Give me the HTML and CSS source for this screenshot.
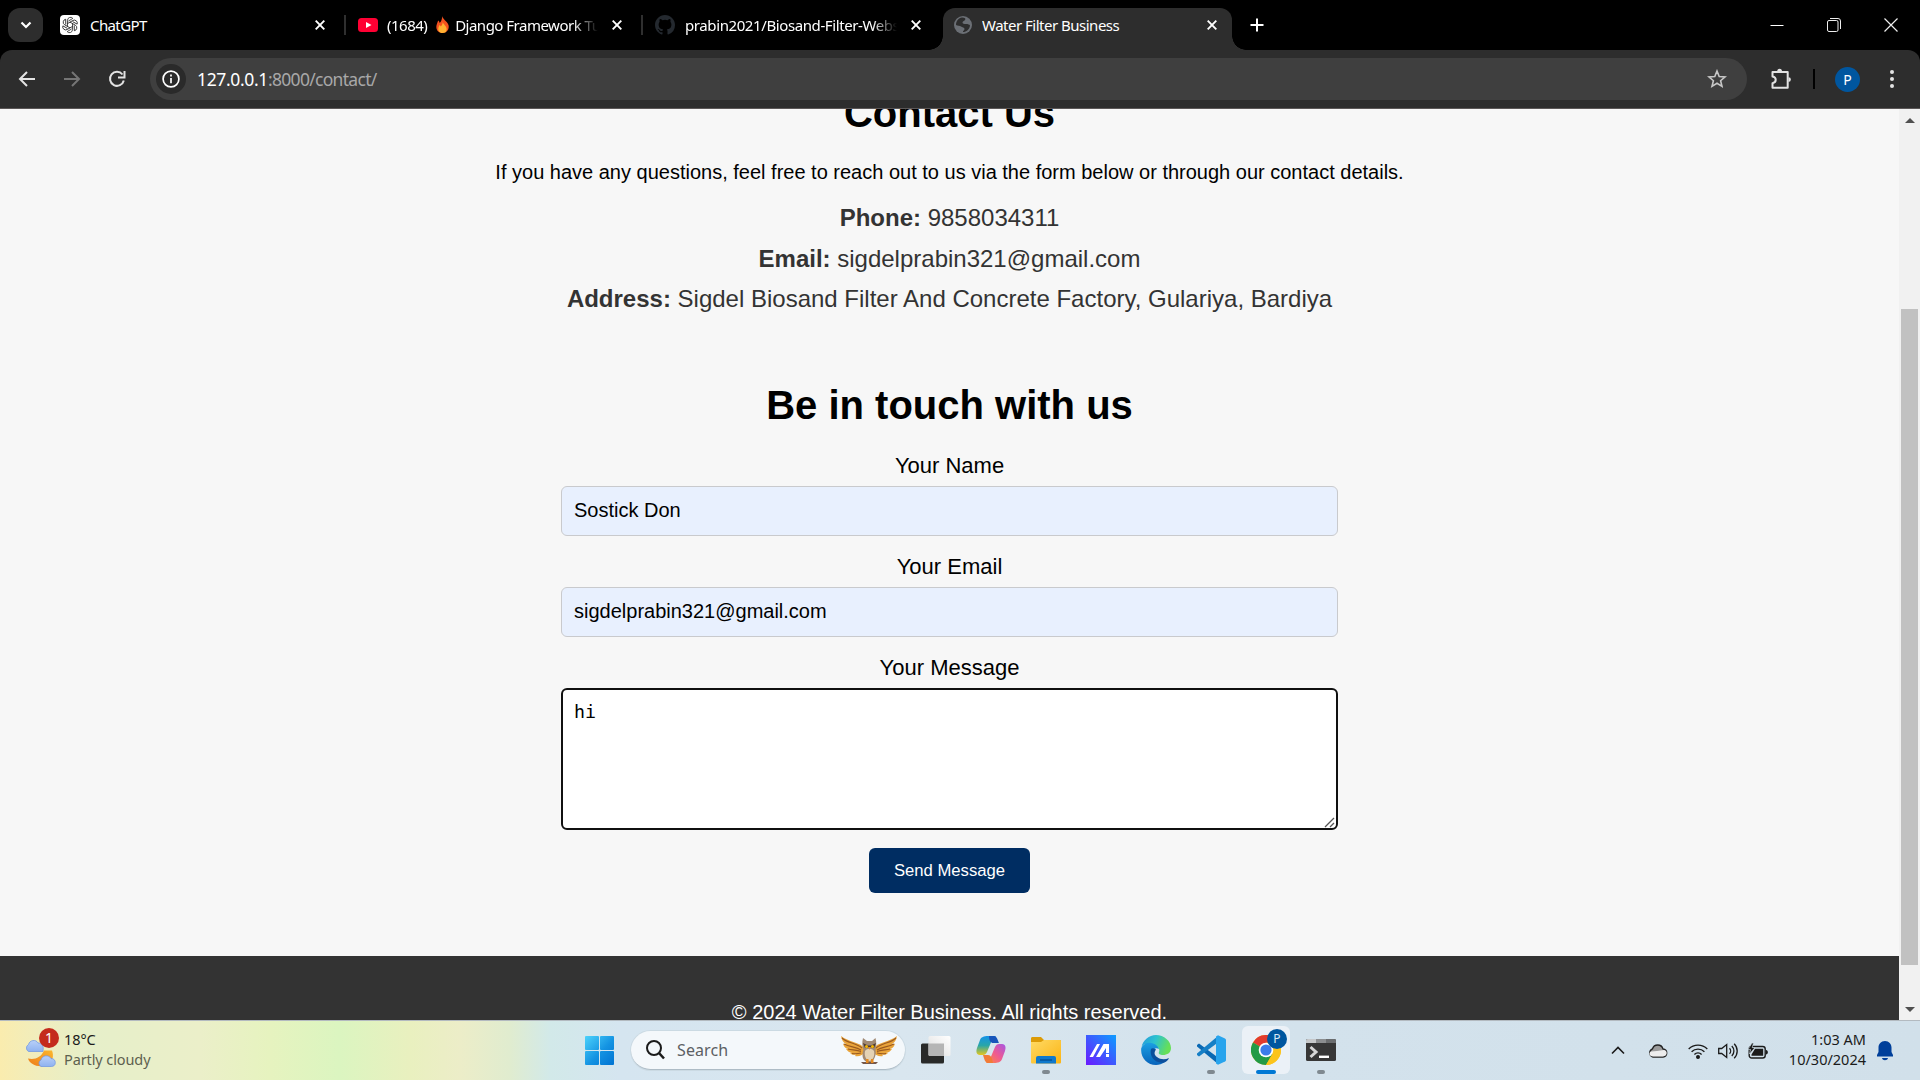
FILE: index.html
```html
<!DOCTYPE html>
<html lang="en">
<head>
<meta charset="utf-8">
<title>Water Filter Business</title>
<link rel="stylesheet" href="styles.css">
</head>
<body>
<div class="screen">
<header class="tabstrip">
  <div class="tab-menu"><svg width="12" height="8" viewBox="0 0 12 8"><path d="M1.5 1.5 6 6l4.500-4.500" fill="none" stroke="#fff" stroke-width="2.200"/></svg></div>
  <div class="tab tab-first">
    <svg class="fav" width="20" height="20" viewBox="0 0 20 20"><rect width="20" height="20" rx="4" fill="#fff"/><g fill="none" stroke="#222" stroke-width=".8"><path id="k" d="M7.500 11.500V5.300a3 3 0 0 1 5.300-1.900L8.300 6.100"/><use href="#k" transform="rotate(60 10 10)"/><use href="#k" transform="rotate(120 10 10)"/><use href="#k" transform="rotate(180 10 10)"/><use href="#k" transform="rotate(240 10 10)"/><use href="#k" transform="rotate(300 10 10)"/></g></svg>
    <span class="tab-title t1">ChatGPT</span>
    <svg class="close" viewBox="0 0 10 10"><path d="M.7.7l8.600 8.600M9.300.7L.7 9.300"/></svg>
  </div>
  <i class="sep"></i>
  <div class="tab tab-mid yt">
    <svg class="fav" width="20" height="20" viewBox="0 0 20 20"><rect y="3" width="20" height="14" rx="3.500" fill="#ff0033"/><path d="M8 7v6l5.500-3z" fill="#fff"/></svg>
    <span class="tab-title t2 fade">(1684) <svg class="flame" width="13" height="17" viewBox="0 0 13 17"><path d="M6 0c.5 3 5 5 6.500 9 1 4-1.500 8-6 8S-.5 13 .6 9c.5-2 1.200-3 1.500-4.500C3 5 3.500 6 3.700 7 5.500 5 6.200 3 6 0z" fill="#f4511e"/><path d="M6.700 6c.3 2 4 4 4 7s-2 4-4.200 4-4.500-1.500-4.200-4.500c.2-1.500.8-2 1-3.500 1 .5 1.300 1 1.600 1.600C6 9 6.800 8 6.700 6z" fill="#ffb031"/></svg> Django Framework Tu</span>
    <svg class="close" viewBox="0 0 10 10"><path d="M.7.7l8.600 8.600M9.300.7L.7 9.300"/></svg>
  </div>
  <i class="sep"></i>
  <div class="tab tab-mid gh">
    <svg class="fav" width="20" height="20" viewBox="0 0 16 16"><path fill="#24292f" d="M8 0C3.580 0 0 3.580 0 8c0 3.540 2.290 6.530 5.470 7.590.4.070.55-.17.55-.38 0-.19-.01-.82-.01-1.490-2.010.37-2.530-.49-2.690-.94-.09-.23-.48-.94-.82-1.130-.28-.15-.68-.52-.01-.53.63-.01 1.080.58 1.230.82.72 1.210 1.870.87 2.330.66.070-.52.280-.87.510-1.070-1.780-.2-3.640-.89-3.640-3.950 0-.87.310-1.590.82-2.150-.08-.2-.36-1.020.080-2.120 0 0 .67-.21 2.200.82a7.600 7.600 0 0 1 4 0c1.530-1.040 2.200-.82 2.200-.82.440 1.100.160 1.920.080 2.120.510.560.820 1.270.820 2.150 0 3.070-1.870 3.750-3.650 3.950.290.250.540.730.540 1.480 0 1.070-.01 1.930-.01 2.200 0 .210.150.460.550.380A8 8 0 0 0 16 8c0-4.420-3.580-8-8-8z"/></svg>
    <span class="tab-title t3 fade">prabin2021/Biosand-Filter-Webs</span>
    <svg class="close" viewBox="0 0 10 10"><path d="M.7.7l8.600 8.600M9.300.7L.7 9.300"/></svg>
  </div>
  <div class="tab tab-active">
    <svg class="fav" width="18" height="18" viewBox="0 0 18 18"><circle cx="9" cy="9" r="9" fill="#6b6f75"/><path d="M8 1.500c3 0 4 1 3 2.500S8.500 5 8.500 6.500 10 8 12 8s3.500.5 4 1.500c-.5 4-3.500 6.500-7 6.500-.5-1 1.500-1.500 1.500-3S8 11.500 7 10.500 3.500 10 2 9C2 5 4.500 2 8 1.500z" fill="#2d2d2d"/></svg>
    <span class="tab-title t4">Water Filter Business</span>
    <svg class="close" viewBox="0 0 10 10"><path d="M.7.7l8.600 8.600M9.300.7L.7 9.300"/></svg>
  </div>
  <svg class="plus" width="14" height="14" viewBox="0 0 14 14"><path d="M7 .5v13M.5 7h13" stroke="#fff" stroke-width="2"/></svg>
  <div class="winctl">
    <svg width="14" height="14" viewBox="0 0 14 14"><path d="M.5 7.500h13" stroke="#fff"/></svg>
    <svg width="14" height="14" viewBox="0 0 14 14" fill="none" stroke="#eee"><rect x=".5" y="2.500" width="10.500" height="11" rx="1.500"/><path d="M3 .5h8a2.500 2.500 0 0 1 2.500 2.500v8"/></svg>
    <svg width="14" height="14" viewBox="0 0 14 14"><path d="M.5.5l13 13M13.500.5l-13 13" stroke="#eee" stroke-width="1.200"/></svg>
  </div>
</header>
<nav class="toolbar">
  <svg class="nav-ic" width="18" height="18" viewBox="0 0 18 18"><path d="M17 9H2.500M9 2L2 9l7 7" fill="none" stroke="#e3e3e3" stroke-width="2"/></svg>
  <svg class="nav-ic" width="18" height="18" viewBox="0 0 18 18"><path d="M1 9h14.500M9 2l7 7-7 7" fill="none" stroke="#757575" stroke-width="2"/></svg>
  <svg class="nav-ic" width="18" height="18" viewBox="0 0 18 18"><path d="M15.800 10.500A7 7 0 1 1 14.500 4.500" fill="none" stroke="#e3e3e3" stroke-width="2"/><path d="M16.500 1v6.500H10" fill="none" stroke="#e3e3e3" stroke-width="2"/></svg>
  <div class="urlbar">
    <span class="site-info"><svg width="18" height="18" viewBox="0 0 18 18"><circle cx="9" cy="9" r="7.900" fill="none" stroke="#fff" stroke-width="1.700"/><path d="M9 8v5.300M9 4.600v1.900" stroke="#fff" stroke-width="1.700"/></svg></span>
    <span class="url">127.0.0.1<span>:8000/contact/</span></span>
    <svg class="star" width="20" height="20" viewBox="0 0 20 20"><path d="M10 2l2.200 5.500 5.900.4-4.500 3.800 1.400 5.700L10 14.300l-5 3.100 1.400-5.700L1.900 7.900l5.900-.4z" fill="none" stroke="#c7c7c7" stroke-width="1.600"/></svg>
  </div>
  <svg class="puzzle" width="22" height="22" viewBox="0 0 22 22"><path d="M2.500 4h15.200v15.700H2.500v-4.500c4.300-.8 4.300-6 0-6.800z" fill="none" stroke="#e3e3e3" stroke-width="2" stroke-linejoin="round"/><path d="M7.200 3.500a2.400 2.700 0 0 1 4.800 0zM18.500 9.200a2.400 2.400 0 0 1 0 4.800z" fill="#e3e3e3"/></svg>
  <i class="bar"></i>
  <span class="avatar">P</span>
  <svg class="kebab" width="4" height="18" viewBox="0 0 4 18" fill="#e3e3e3"><circle cx="2" cy="2" r="2"/><circle cx="2" cy="9" r="2"/><circle cx="2" cy="16" r="2"/></svg>
</nav>
<div class="viewport">
  <main class="page">
    <section class="contact">
      <h2>Contact Us</h2>
      <p class="intro">If you have any questions, feel free to reach out to us via the form below or through our contact details.</p>
      <p class="detail"><b>Phone:</b> 9858034311</p>
      <p class="detail"><b>Email:</b> sigdelprabin321@gmail.com</p>
      <p class="detail"><b>Address:</b> Sigdel Biosand Filter And Concrete Factory, Gulariya, Bardiya</p>
    </section>
    <form class="form">
      <h2>Be in touch with us</h2>
      <label>Your Name</label>
      <input type="text" value="Sostick Don">
      <label>Your Email</label>
      <input type="text" value="sigdelprabin321@gmail.com">
      <label>Your Message</label>
      <div class="message">hi<svg class="grip" width="12" height="12" viewBox="0 0 12 12"><path d="M1 11L10 2M6 11l4-4" stroke="#555" stroke-width="1.300"/></svg></div>
      <button type="button">Send Message</button>
    </form>
    <footer class="footer">© 2024 Water Filter Business. All rights reserved.</footer>
  </main>
  <aside class="scroll">
    <i class="arrow up"></i><i class="thumb"></i><i class="arrow down"></i>
  </aside>
</div>
<div class="taskbar">
  <div class="weather">
    <svg width="36" height="44" viewBox="0 0 36 44"><defs><linearGradient id="cl" x1="0" y1="0" x2="0" y2="1"><stop offset="0" stop-color="#b9d0f8"/><stop offset="1" stop-color="#8fb2f0"/></linearGradient><linearGradient id="mo" x1="1" y1="0" x2="0" y2="1"><stop offset="0" stop-color="#fbb52c"/><stop offset="1" stop-color="#ee7d1a"/></linearGradient></defs>
      <path d="M4 29.500c7 1.500 13-1 16-8h8c2 5 1 12-5 14.500-8 3-17 0-19-6.500z" fill="url(#mo)"/>
      <path d="M4.500 22.500a4 4 0 0 1 0-7C5.500 11 12 10 14 14c4 0 6 2 5 8.500z" fill="url(#cl)" stroke="#6b94e2" stroke-width=".7"/>
      <path d="M17 37.500a3.600 3.600 0 0 1 0-6.500c1-5 8-5.500 10-1.500 3 0 4.300 2 4.300 4.200 0 2.600-1.800 3.800-4 3.800z" fill="url(#cl)" stroke="#6b94e2" stroke-width=".7"/></svg>
    <span class="badge">1</span>
    <div class="weather-text"><span>18°C</span><span class="dim">Partly cloudy</span></div>
  </div>
  <div class="apps">
    <div class="app"><svg width="29" height="29" viewBox="0 0 29 29"><defs><linearGradient id="w" x1="0" y1="0" x2="29" y2="29" gradientUnits="userSpaceOnUse"><stop offset="0" stop-color="#4cd2fb"/><stop offset=".55" stop-color="#1493e2"/><stop offset="1" stop-color="#0073d2"/></linearGradient></defs><g fill="url(#w)"><rect width="14" height="14" rx="1"/><rect x="15" width="14" height="14" rx="1"/><rect y="15" width="14" height="14" rx="1"/><rect x="15" y="15" width="14" height="14" rx="1"/></g></svg></div>
    <div class="search"><svg width="19" height="20" viewBox="0 0 19 20"><circle cx="8" cy="8" r="7" fill="none" stroke="#1b1b1b" stroke-width="2"/><path d="M13 13l5 5.500" stroke="#1b1b1b" stroke-width="2.600"/></svg><span>Search</span>
      <svg class="owl" width="56" height="30" viewBox="0 0 56 30"><g id="wing"><path d="M24 14C20 7 7 7 0 1c1 5 3 7 5 8-2 0-2 0-3-.5 1 4 3 5 5 5.500H5c2 3 4 3.500 6 3.500l-2 .5c2 2 4 2 6 1.500l-1 1.500c4 1 8-1 10-4z" fill="#e9a43a"/><path d="M1 3c5 5 14 5 20 10M3 9c6 3 12 3 17 6M7 14c4 1 9 1 13 2.500M11 18.500c3 .5 6 .3 9-.5" fill="none" stroke="#9a5a20" stroke-width="1.100"/></g><use href="#wing" transform="matrix(-1 0 0 1 56 0)"/><path d="M22 3l4 3h5l3.500-3c1 4 1 8 0 12 1 5-1 10-5 12h-4c-4-2-5-7-3-12-1.500-4-1.500-8-.5-12z" fill="#a18a74"/><path d="M24 16c2-3 7-3 9 0 1 5-1 9-4.500 10C25 25 23 21 24 16z" fill="#e4d2b4"/><path d="M22 8l5 2.500h3L35 8l-2 5-4.500-1-4.500 1z" fill="#4c3a32"/><circle cx="25.500" cy="11.500" r="1.500" fill="#f5b800"/><circle cx="31.500" cy="11.500" r="1.500" fill="#f5b800"/><path d="M27.300 12h2.400l-1.200 3z" fill="#ea8b18"/><path d="M20 27h17l-2 2H22z" fill="#75584b"/><path d="M25 24h2.500v4H25zM30 24h2.500v4H30z" fill="#e58a20"/></svg></div>
    <div class="app"><svg width="30" height="30" viewBox="0 0 30 30"><defs><linearGradient id="tv" x1="1" y1="0" x2="0" y2="1"><stop offset="0" stop-color="#fff"/><stop offset="1" stop-color="#dedede"/></linearGradient></defs><rect y="8.500" width="23" height="20" rx="1.500" fill="#292a29"/><rect x="7.500" y="1" width="22" height="20" rx="1.500" fill="url(#tv)"/><path d="M7.500 8.500H23V21H9a1.500 1.500 0 0 1-1.500-1.500z" fill="#b5b5b5"/></svg></div>
    <div class="app"><svg width="30" height="30" viewBox="0 0 30 30"><defs><linearGradient id="c1" x1="0" y1="0" x2="0" y2="1"><stop offset="0" stop-color="#1492e8"/><stop offset=".5" stop-color="#29a6a8"/><stop offset="1" stop-color="#e6c71c"/></linearGradient><linearGradient id="c2" x1="0" y1="1" x2="1" y2="0"><stop offset="0" stop-color="#ff8b3a"/><stop offset=".5" stop-color="#ef5b91"/><stop offset="1" stop-color="#a656e4"/></linearGradient></defs><path d="M12 1h8l-4 4-5 12c-1 2-2 3-4 3H4c-4 0-4-4-3-7L4 5c1-3 4-4 8-4z" fill="url(#c1)"/><path d="M13 1h5c3 0 4 5 5 7h-6c-2 0-4-2-4-7z" fill="#1755ba"/><path d="M18 28h-8l4-4 5-12c1-2 2-3 4-3h3c4 0 4 4 3 7l-3 8c-1 3-4 4-8 4z" fill="url(#c2)"/><path d="M17 28h-5c-3 0-4-5-5-8h5c3 0 4 3 5 8z" fill="#f17b37"/></svg></div>
    <div class="app run"><svg width="30" height="28" viewBox="0 0 30 28"><defs><linearGradient id="fo" x1="0" y1="0" x2="1" y2="1"><stop offset="0" stop-color="#ffda64"/><stop offset="1" stop-color="#fbb414"/></linearGradient></defs><path d="M0 2.500C0 1.500.7 1 1.500 1H10l3 3h15.500c1 0 1.500.5 1.500 1.500V12H0z" fill="#dc9b07"/><path d="M0 6h10l3-2h15.500c1 0 1.500.5 1.500 1.500V26c0 1-.5 1.500-1.500 1.500h-27C.5 27.500 0 27 0 26z" fill="url(#fo)"/><path d="M5 27.500V22a2 2 0 0 1 2-2h16a2 2 0 0 1 2 2v5.500z" fill="#1079cc"/><path d="M9 24h12" stroke="#064d91" stroke-width="1.300"/></svg></div>
    <div class="app"><svg width="30" height="30" viewBox="0 0 30 30"><defs><linearGradient id="ma" x1="0" y1="1" x2="1" y2="0"><stop offset="0" stop-color="#6c18ff"/><stop offset="1" stop-color="#0d9dff"/></linearGradient></defs><rect width="30" height="30" fill="url(#ma)"/><path d="M3.500 22L11 9h3L7 22zM10 22l7.500-13H23v9h-3v-5L14 22z" fill="#fff"/><rect x="20" y="19" width="3" height="3" fill="#fff"/></svg></div>
    <div class="app"><svg width="30" height="30" viewBox="0 0 30 30"><defs><linearGradient id="e1" x1="0" y1="0" x2="1" y2=".3"><stop offset="0" stop-color="#2496dd"/><stop offset=".5" stop-color="#2dc3cf"/><stop offset="1" stop-color="#66df58"/></linearGradient><linearGradient id="e2" x1="0" y1="0" x2="0" y2="1"><stop offset="0" stop-color="#1b9fe2"/><stop offset="1" stop-color="#0763bb"/></linearGradient></defs><path d="M.5 12C2 5 8 0 15 0c8 0 15 6 15 13 0 5-4 7-8 7-3 0-5-1-4-3s0-5-4-6C9 8 3 8 .5 12z" fill="url(#e1)"/><path d="M.3 13C2 9 6 7 10 8c4 .5 7 3 8 6-4-2-7 1-6 5 1 5 6 8 12 8-3 2-6 3-9 3C6 30-1 22 .3 13z" fill="url(#e2)"/><path d="M10 14c-2 7 4 15 13 13.500 2-.5 4-2 5-4.500-4 2-9 1.500-12-1-3-2-3-5-1-7.500-2-1.500-4-1.500-5-.5z" fill="#0c4f9c"/></svg></div>
    <div class="app run"><svg width="30" height="30" viewBox="0 0 30 30"><path d="M1 10l2-1.500 19 14V29L1 11.500z" fill="#0a69b4"/><path d="M1 20l2 1.500 19-14V1L1 18.500z" fill="#167fc6"/><path d="M22 .2l7 3.300c.7.4 1 .9 1 1.600v19.800c0 .7-.3 1.200-1 1.600l-7 3.300-2-1.300V1.500z" fill="#28a4ed"/></svg></div>
    <div class="app on"><svg width="30" height="30" viewBox="0 0 30 30"><circle cx="15" cy="15" r="15" fill="#fcc41c"/><path d="M15 15L2 7.500A15 15 0 0 1 28 7.500z" fill="#e23b2e"/><path d="M15 15L2 7.500a15 15 0 0 0 13 22.500l6.500-11.250z" fill="#229a46"/><path d="M15 7.500h13a15 15 0 0 1-13 22.500l6.500-11z" fill="#fcc41c"/><circle cx="15" cy="15" r="7.300" fill="#fff"/><circle cx="15" cy="15" r="5.600" fill="#3b7cea"/></svg><span class="mini">P</span></div>
    <div class="app run"><svg width="30" height="22" viewBox="0 0 30 22"><rect width="30" height="22" rx="1.500" fill="#373737"/><path d="M1.500 0H10v4H0V1.500A1.500 1.500 0 0 1 1.500 0z" fill="#c6c8ca"/><path d="M10 0h10v4H10z" fill="#8c8e90"/><path d="M20 0h8.500A1.500 1.500 0 0 1 30 1.500V4H20z" fill="#6b6d6f"/><path d="M4.500 8l5.500 5-5.500 5" fill="none" stroke="#d6d6d6" stroke-width="3"/><path d="M13 17.800h10" stroke="#fff" stroke-width="2.400"/></svg></div>
  </div>
  <div class="tray">
    <svg class="i1" width="14" height="9" viewBox="0 0 14 9"><path d="M1 7.500l6-6 6 6" fill="none" stroke="#1b1b1b" stroke-width="1.600"/></svg>
    <svg class="i2" width="20" height="14" viewBox="0 0 20 14"><path d="M5 13a4.300 4.300 0 0 1-.5-8.200C6-.2 13.500-.4 15 5c5 .5 5 7.500 0 8z" fill="#9b9b9b" stroke="#222" stroke-width="1.300"/><path d="M5 12.500c-4 0-4.500-4-2-5L9 7l7-1c4 1 3.500 6-1 6.500z" fill="#ededed"/></svg>
    <svg class="i3" width="20" height="16" viewBox="0 0 20 16" fill="none" stroke="#1b1b1b" stroke-width="1.400"><path d="M.7 6a13.200 13.200 0 0 1 18.600 0M3.600 8.800a9 9 0 0 1 12.800 0M6.400 11.500a5.200 5.200 0 0 1 7.200 0"/><circle cx="10" cy="14" r="1.300" fill="#1b1b1b"/></svg>
    <svg class="i4" width="20" height="18" viewBox="0 0 20 18" fill="none" stroke="#1b1b1b" stroke-width="1.300"><path d="M.7 6.500v5h3l5 4V2.500l-5 4z"/><path d="M11.500 6.200a4 4 0 0 1 0 5.600M13.800 4a7 7 0 0 1 0 10M16.200 1.700a10.400 10.400 0 0 1 0 14.600"/></svg>
    <svg class="i5" width="20" height="16" viewBox="0 0 20 16"><rect x="1.200" y="3.500" width="16" height="11.500" rx="2.500" fill="none" stroke="#1b1b1b" stroke-width="1.400"/><path d="M18 7c2.500 0 2.500 4.500 0 4.500zM3.500 11.500L7 5.800h8.200v7H3.500z" fill="#1b1b1b"/><path d="M4 0L0 6.500h2.500L1.500 11 7 4.500H4.200L5.500 0z" fill="#1b1b1b" stroke="#d1e0ea" stroke-width=".6"/></svg>
    <div class="clock"><span>1:03 AM</span><span>10/30/2024</span></div>
    <svg class="i6" width="16" height="20" viewBox="0 0 16 20"><path d="M8 0c4 0 6.500 3 6.500 6.500V11l1.500 3v1.500H0V14l1.500-3V6.500C1.500 3 4 0 8 0zM5 17h6c-.5 3-5.500 3-6 0z" fill="#003f9a"/></svg>
  </div>
</div>
</div>
</body>
</html>
```
FILE: styles.css
```css
* { box-sizing: border-box; }
body { margin: 0; overflow: hidden; font-family: "Liberation Sans", Arial, sans-serif; }
svg { display: block; flex: none; }
.screen { width: 1920px; height: 1080px; display: flex; flex-direction: column; background: #000; }

.tabstrip { height: 50px; flex: none; display: flex; align-items: center; padding-left: 8px; background: #000; color: #fff; }
.tab-menu { width: 35px; height: 34px; border-radius: 12px; background: #2d2d2d; display: flex; align-items: center; justify-content: center; }
.tab { display: flex; align-items: center; height: 42px; }
.tab-first { width: 301px; padding: 0 19px 0 17px; }
.tab-mid { width: 295px; padding: 0 19px 0 12px; }
.tab-mid.gh { padding-right: 17px; }
.sep { width: 2px; height: 20px; background: #2f2f2f; }
.tab-title { flex: 1; min-width: 0; margin-left: 9px; margin-right: 14px; overflow: hidden; white-space: nowrap; font: 15px/20px "Noto Sans", sans-serif; display: flex; }
.t2, .t3 { white-space: pre; }
.tab-title.fade { -webkit-mask-image: linear-gradient(to right, #000 88%, transparent 100%); mask-image: linear-gradient(to right, #000 88%, transparent 100%); }
.t1 { letter-spacing: -.6px; margin-left: 10px; }
.t2 { letter-spacing: -.5px; }
.t3 { letter-spacing: -.4px; margin-left: 10px; }
.t4 { letter-spacing: -.5px; margin-left: 10px; }
.flame { margin: 1px 3px 0 5px; }
.close { width: 10px; height: 10px; stroke: #fff; stroke-width: 1.900; }
.tab-active { position: relative; width: 289px; height: 42px; margin-left: 5px; padding: 0 15px 8px 11px; background: #2d2d2d; border-radius: 12px 12px 0 0; align-self: flex-end; }
.tab-active::before, .tab-active::after { content: ""; position: absolute; bottom: 0; width: 14px; height: 14px; }
.tab-active::before { left: -14px; background: radial-gradient(circle at 0 0, transparent 13.500px, #2d2d2d 14px); }
.tab-active::after { right: -14px; background: radial-gradient(circle at 100% 0, transparent 13.500px, #2d2d2d 14px); }
.plus { margin-left: 18px; }
.winctl { margin-left: auto; display: flex; gap: 43px; padding-right: 22px; }

.toolbar { height: 59px; flex: none; display: flex; align-items: center; padding-left: 18px; background: #2d2d2d; border-bottom: 1px solid #5b5757; border-radius: 12px 12px 0 0; }
.nav-ic { margin-right: 27px; }
.urlbar { width: 1597px; height: 42px; margin-left: -3px; border-radius: 21px; background: #3f3f3f; display: flex; align-items: center; padding: 0 20px 0 6px; }
.site-info { width: 30px; height: 30px; border-radius: 50%; background: #2a2a2a; display: flex; align-items: center; justify-content: center; }
.url { margin-left: 11px; font: 17.500px/24px "Noto Sans", sans-serif; letter-spacing: -.35px; color: #fff; }
.url span { color: #a8a8a8; letter-spacing: -.7px; }
.star { margin-left: auto; }
.puzzle { margin-left: 23px; }
.bar { width: 2px; height: 20px; margin-left: 21px; background: #000; }
.avatar { width: 25px; height: 25px; margin-left: 20px; border-radius: 50%; background: #00569f; color: #fff; font: 14px/25px "Noto Sans", sans-serif; text-align: center; }
.kebab { margin-left: 30px; }

.viewport { height: 911px; flex: none; display: flex; overflow: hidden; }
.page { width: 1899px; background: #f7f7f7; overflow: hidden; text-align: center; color: #000; }
h2 { margin: 0; font-size: 40px; line-height: 46px; font-weight: bold; }
.contact { margin-top: -19px; }
.intro { margin: 13px 0 0; font-size: 20px; line-height: 46px; }
.detail { margin: 0; font-size: 24px; line-height: 40.700px; color: #333; }
.intro + .detail { margin-top: 3px; }
.form { width: 777px; margin: 62px auto 0; display: flex; flex-direction: column; align-items: center; }
.form label { font-size: 22px; line-height: 26px; margin-bottom: 7px; }
.form h2 + label { margin-top: 25px; }
.form input { width: 777px; height: 50px; border: 1px solid #c9cacd; border-radius: 6px; background: #e8f0fe; padding: 0 12px 2px; font: 20px "Liberation Sans", Arial, sans-serif; margin-bottom: 18px; outline: 0; color: #000; }
.message { position: relative; width: 777px; height: 142px; border: 2px solid #101010; border-radius: 6px; background: #fff; padding: 10px 11px; text-align: left; font: 18.300px/24px "DejaVu Sans Mono", monospace; }
.grip { position: absolute; right: 0; bottom: 0; }
.form button { width: 161px; height: 45px; margin-top: 18px; border: 0; border-radius: 6px; background: #002d62; color: #fff; font: 16.670px "Liberation Sans", Arial, sans-serif; padding: 0; }
.footer { margin-top: 63px; height: 120px; background: #333; color: #fff; font-size: 20px; line-height: 24px; padding-top: 44px; }
.scroll { width: 21px; background: #f1f1f1; display: flex; flex-direction: column; align-items: center; }
.arrow { border: 5px solid transparent; width: 0; height: 0; }
.up { border-top: 0; border-bottom-color: #505050; margin-top: 9px; }
.thumb { width: 17px; height: 656px; margin-top: 186px; background: #c1c1c1; }
.down { border-bottom: 0; border-top-color: #505050; margin-top: 42px; }

.taskbar { height: 60px; flex: none; border-top: 1px solid #b3bac0; display: flex; align-items: center; font-family: "Noto Sans", sans-serif; color: #1b1b1b; background: linear-gradient(to right, #faecae 0, #f0edbd 40px, #e6efc9 90px, #ebefc9 200px, #e6f3bf 270px, #dbf5c0 340px, #e9f0bf 410px, #ecedc8 460px, #e0eccf 510px, #d2e9e9 550px, #d5e5f0 620px, #d9e6ef 900px, #d3e2ec 1300px, #d1e0ea 1920px); }
.weather { position: relative; width: 560px; display: flex; align-items: center; padding-left: 24px; }
.badge { position: absolute; left: 39px; top: -1px; width: 20px; height: 20px; border-radius: 50%; background: #c42b1c; color: #fff; font-size: 14px; line-height: 20px; text-align: center; }
.weather-text { display: flex; flex-direction: column; font-size: 14.500px; line-height: 20px; margin-left: 4px; padding-bottom: 4px; letter-spacing: -.1px; }
.dim { color: #5e614f; }
.apps { display: flex; align-items: center; height: 59px; gap: 7px; margin-left: 15px; padding-bottom: 1px; }
.app { position: relative; width: 48px; height: 48px; flex: none; display: flex; align-items: center; justify-content: center; }
.app:first-child { width: 49px; }
.run::after, .on::after { content: ""; position: absolute; bottom: 0; width: 8px; height: 4px; border-radius: 2px; background: #7f8990; }
.on { background: #ebf1f7; border-radius: 6px; }
.on::after { width: 20px; background: #0078d4; }
.mini { position: absolute; left: 25px; top: 3px; width: 20px; height: 20px; border-radius: 50%; background: #00569f; color: #d7e8f6; font-size: 12px; line-height: 20px; text-align: center; }
.search { width: 274px; height: 39px; border-radius: 20px; background: #f4f8fb; border-bottom: 1px solid #aebcc6; box-shadow: 0 0 0 1px #cbdae3; display: flex; align-items: center; padding: 0 8px 0 15px; font-size: 16px; color: #5c6064; }
.search span { margin-left: 12px; letter-spacing: .1px; }
.owl { margin-left: auto; }
.tray { margin-left: auto; display: flex; align-items: center; }
.i2 { margin-left: 23px; }
.i3, .i4, .i5 { margin-left: 10px; }
.i3 { margin-left: 20px; }
.clock { width: 98px; display: flex; flex-direction: column; text-align: right; font-size: 14.500px; line-height: 20px; padding-bottom: 4px; letter-spacing: 0; white-space: nowrap; }
.i6 { margin: 0 27px 0 11px; }
```
